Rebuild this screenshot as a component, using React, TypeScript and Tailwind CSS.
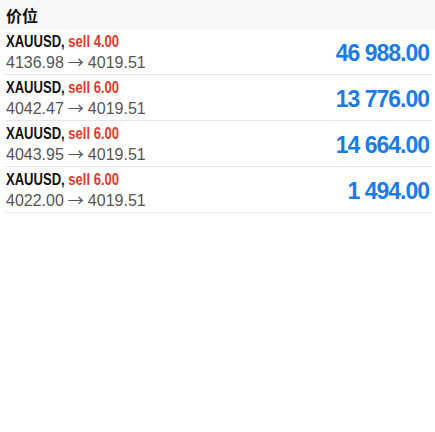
export default function App() {
  const rows = [
    { sell: "4.00", from: "4136.98", to: "4019.51", val: "46 988.00" },
    { sell: "6.00", from: "4042.47", to: "4019.51", val: "13 776.00" },
    { sell: "6.00", from: "4043.95", to: "4019.51", val: "14 664.00" },
    { sell: "6.00", from: "4022.00", to: "4019.51", val: "1 494.00" },
  ];
  return (
    <div className="w-[435px] h-[432px] bg-white" style={{ fontFamily: '"Liberation Sans", Arial, sans-serif' }}>
      <div className="h-[29px] bg-[#f7f7f7] flex items-center pl-[6px]">
        <span className="text-[16px] font-bold text-[#111] leading-none" style={{ fontFamily: '"Noto Sans CJK SC", sans-serif' }}>价位</span>
      </div>
      {rows.map((r, i) => (
        <div key={i} className="ml-[5px] mr-[3px] h-[46px] border-b border-[#e6e6e6] flex items-start justify-between pl-[1px]">
          <div className="flex flex-col pt-[5px]">
            <div className="text-[16px] font-bold leading-none h-[16px] whitespace-nowrap">
              <span className="inline-block origin-left scale-x-[0.815]">
                <span className="text-[#111]">XAUUSD,</span>{" "}
                <span className="text-[#e2392e]">sell {r.sell}</span>
              </span>
            </div>
            <div className="text-[16px] text-[#555] mt-[3px] leading-none h-[16px] whitespace-nowrap flex items-baseline">
              <span>{r.from}</span>
              <span className="px-[4px]" style={{ fontFamily: '"Noto Sans CJK SC", sans-serif' }}>→</span>
              <span>{r.to}</span>
            </div>
          </div>
          <div className="pt-[13px] pr-[3px] text-[23px] font-bold text-[#1b7ce8] leading-none tracking-[-1px] whitespace-nowrap">
            {r.val}
          </div>
        </div>
      ))}
    </div>
  );
}
